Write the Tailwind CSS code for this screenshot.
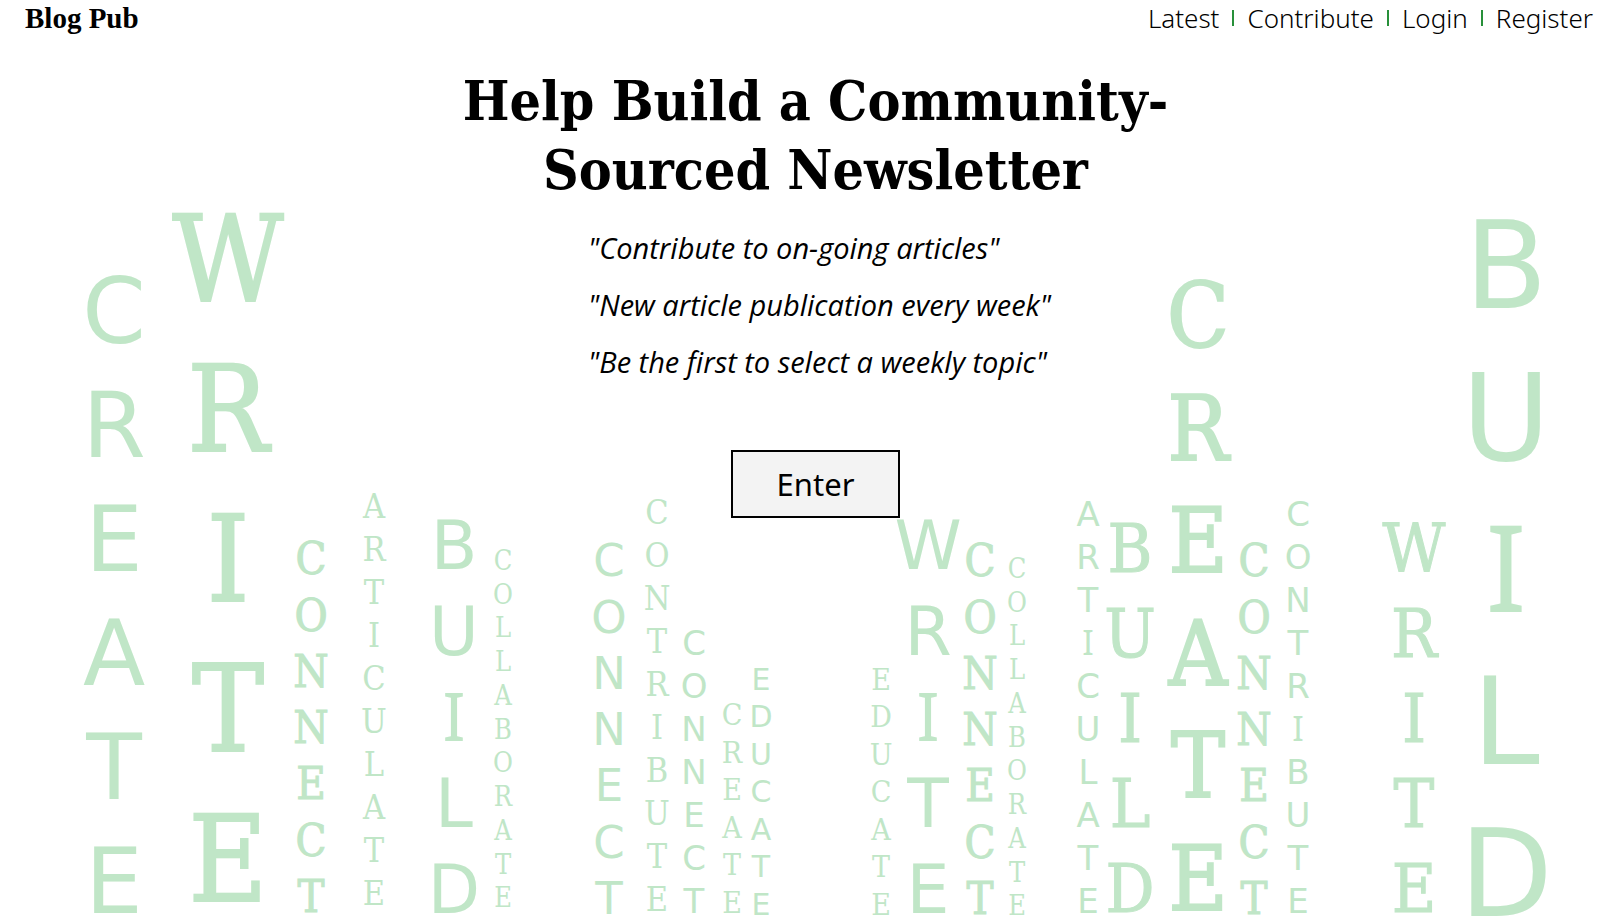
<!DOCTYPE html>
<html lang="en">
<head>
<meta charset="utf-8">
<meta name="viewport" content="width=device-width, initial-scale=1">
<title>Blog Pub</title>
<script src="https://cdn.jsdelivr.net/npm/@tailwindcss/browser@4"></script>
</head>
<body class="bg-white text-black">
<div class="relative flex min-h-screen flex-col overflow-hidden font-['Open_Sans',sans-serif]">

  <!-- Decorative skyline of words: each track ends at the centre line of its word -->
  <div aria-hidden="true" class="pointer-events-none absolute inset-0 grid grid-cols-[114fr_114fr_83fr_63fr_80fr_49fr_106fr_48fr_37fr_38fr_29fr_120fr_47fr_52fr_37fr_71fr_42fr_68fr_56fr_44fr_116fr_92fr_111fr] items-end overflow-hidden text-center leading-tight text-[#c0e6c7] *:flex *:w-0 *:justify-center *:justify-self-end">
    <div class="-mb-4 font-['DejaVu_Sans',sans-serif] text-[91px] leading-[114px]"><p>C<br>R<br>E<br>A<br>T<br>E</p></div>
    <div class="-mb-3 font-['DejaVu_Serif_Condensed','DejaVu_Serif',serif] text-[120px] [-webkit-text-stroke:2px]"><p>W<br>R<br>I<br>T<br>E</p></div>
    <div class="-mb-0.5 font-['DejaVu_Serif_Condensed','DejaVu_Serif',serif] text-[45px] [-webkit-text-stroke:1px]"><p>C<br>O<br>N<br>N<br>E<br>C<br>T</p></div>
    <div class="mb-2 font-['DejaVu_Serif_Condensed','DejaVu_Serif',serif] text-[34px] leading-[43px]"><p>A<br>R<br>T<br>I<br>C<br>U<br>L<br>A<br>T<br>E</p></div>
    <div class="-mb-2.5 font-['DejaVu_Sans',sans-serif] text-[68px] leading-[86px]"><p>B<br>U<br><span class="font-['Noto_Sans',sans-serif] leading-none">I</span><br>L<br>D</p></div>
    <div class="mb-2 font-['DejaVu_Serif_Condensed','DejaVu_Serif',serif] text-[27px]"><p>C<br>O<br>L<br>L<br>A<br>B<br>O<br>R<br>A<br>T<br>E</p></div>
    <div class="-mb-1 font-['DejaVu_Sans',sans-serif] text-[45px]"><p>C<br>O<br>N<br>N<br>E<br>C<br>T</p></div>
    <div class="mb-0.5 font-['DejaVu_Serif_Condensed','DejaVu_Serif',serif] text-[34px] leading-[43px]"><p>C<br>O<br>N<br>T<br>R<br>I<br>B<br>U<br>T<br>E</p></div>
    <div class="font-['DejaVu_Sans',sans-serif] text-[34px] leading-[43px]"><p>C<br>O<br>N<br>N<br>E<br>C<br>T</p></div>
    <div class="mb-0.5 font-['DejaVu_Serif_Condensed','DejaVu_Serif',serif] text-[30px]"><p>C<br>R<br>E<br>A<br>T<br>E</p></div>
    <div class="font-['DejaVu_Sans',sans-serif] text-[30px]"><p>E<br>D<br>U<br>C<br>A<br>T<br>E</p></div>
    <div class="font-['DejaVu_Serif_Condensed','DejaVu_Serif',serif] text-[30px]"><p>E<br>D<br>U<br>C<br>A<br>T<br>E</p></div>
    <div class="-mb-2.5 font-['DejaVu_Sans',sans-serif] text-[68px] leading-[86px]"><p>W<br>R<br><span class="font-['Noto_Sans',sans-serif] leading-none">I</span><br>T<br>E</p></div>
    <div class="-mb-1 font-['DejaVu_Serif_Condensed','DejaVu_Serif',serif] text-[45px] [-webkit-text-stroke:1px]"><p>C<br>O<br>N<br>N<br>E<br>C<br>T</p></div>
    <div class="font-['DejaVu_Serif_Condensed','DejaVu_Serif',serif] text-[27px]"><p>C<br>O<br>L<br>L<br>A<br>B<br>O<br>R<br>A<br>T<br>E</p></div>
    <div class="font-['DejaVu_Sans',sans-serif] text-[34px] leading-[43px]"><p>A<br>R<br>T<br><span class="font-['Noto_Sans',sans-serif] leading-none">I</span><br>C<br>U<br>L<br>A<br>T<br>E</p></div>
    <div class="-mb-2 font-['DejaVu_Serif_Condensed','DejaVu_Serif',serif] text-[68px] [-webkit-text-stroke:1px]"><p>B<br>U<br>I<br>L<br>D</p></div>
    <div class="-mb-3 font-['DejaVu_Serif_Condensed','DejaVu_Serif',serif] text-[90px] [-webkit-text-stroke:2px]"><p>C<br>R<br>E<br>A<br>T<br>E</p></div>
    <div class="-mb-1 font-['DejaVu_Serif_Condensed','DejaVu_Serif',serif] text-[45px] [-webkit-text-stroke:1px]"><p>C<br>O<br>N<br>N<br>E<br>C<br>T</p></div>
    <div class="font-['DejaVu_Sans',sans-serif] text-[34px] leading-[43px]"><p>C<br>O<br>N<br>T<br>R<br><span class="font-['Noto_Sans',sans-serif] leading-none">I</span><br>B<br>U<br>T<br>E</p></div>
    <div class="-mb-2 font-['DejaVu_Serif_Condensed','DejaVu_Serif',serif] text-[68px] [-webkit-text-stroke:1px]"><p>W<br>R<br>I<br>T<br>E</p></div>
    <div class="-mb-7 font-['DejaVu_Sans',sans-serif] text-[121px] leading-[152px]"><p>B<br>U<br><span class="font-['Noto_Sans',sans-serif] leading-none">I</span><br>L<br>D</p></div>
  </div>

  <header class="relative flex items-center justify-between pr-6 pl-[25px]">
    <a href="#" class="font-['Liberation_Serif',serif] text-[29px] leading-9 font-bold">Blog Pub</a>
    <nav aria-label="Main" class="flex items-center gap-[13px] font-['Noto_Sans',sans-serif] text-[26px] leading-[35px] font-light">
      <a href="#latest">Latest</a>
      <span class="h-4 w-0.5 bg-[#28903a]"></span>
      <a href="#contribute">Contribute</a>
      <span class="h-4 w-0.5 bg-[#28903a]"></span>
      <a href="#login">Login</a>
      <span class="h-4 w-0.5 bg-[#28903a]"></span>
      <a href="#register">Register</a>
    </nav>
  </header>

  <main class="relative flex flex-col items-center pt-[30px] pl-[14px]">
    <h1 class="text-center font-['DejaVu_Serif_Condensed','DejaVu_Serif',serif] text-[55px] leading-[69px] font-bold">Help Build a Community-<br>Sourced Newsletter</h1>
    <ul class="mt-[15px] pl-2 text-[29px] leading-[57px] italic">
      <li>"Contribute to on-going articles"</li>
      <li>"New article publication every week"</li>
      <li>"Be the first to select a weekly topic"</li>
    </ul>
    <button type="button" class="mt-15 border-2 border-black bg-[#f3f3f3] px-11 py-3 font-['Noto_Sans',sans-serif] text-[31px] leading-10">Enter</button>
  </main>
</div>
</body>
</html>
